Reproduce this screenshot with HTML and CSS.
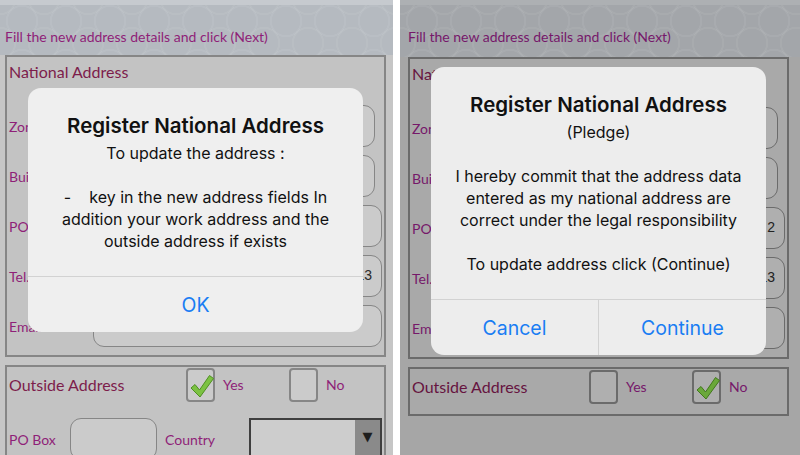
FILE: index.html
```html
<!DOCTYPE html>
<html lang="en">

<head>
    <meta charset="UTF-8">
    <meta name="viewport" content="width=device-width, initial-scale=1.0">
    <title>Register National Address</title>
    <link rel="stylesheet" href="styles.css">
</head>

<body>
    <div class="page">
        <!-- 第一屏：说明弹窗 -->
        <section class="screen">
            <div class="head">
                <p class="hint">Fill the new address details and click (Next)</p>
            </div>
            <div class="box">
                <h2 class="box-title">National Address</h2>
                <div class="rows">
                    <div class="row"><span class="label">Zone</span><span class="field short"></span></div>
                    <div class="row"><span class="label">Building</span><span class="field short"></span></div>
                    <div class="row"><span class="label">PO Box</span><span class="field"></span></div>
                    <div class="row"><span class="label">Tel.</span><span class="field">13</span></div>
                    <div class="row"><span class="label">Email</span><span class="field"></span></div>
                </div>
            </div>
            <div class="box outside">
                <div class="check-row">
                    <span class="box-title">Outside Address</span>
                    <label class="opt">
                        <span class="check on">
                            <svg viewBox="0 0 30 34" width="30" height="34">
                                <path d="M5 20 L9 16.5 L13.5 22 L23.5 7.5 L27.5 10.5 L14 29 Z" fill="#7cc243" stroke="#4f8f22" stroke-width="1" stroke-linejoin="round" />
                            </svg>
                        </span>
                        Yes
                    </label>
                    <label class="opt"><span class="check"></span>No</label>
                </div>
                <div class="po-row">
                    <span class="label po">PO Box</span>
                    <span class="field po-field"></span>
                    <span class="label country">Country</span>
                    <span class="select"><span class="arrow">&#9660;</span></span>
                </div>
            </div>

            <div class="alert">
                <div class="alert-body">
                    <h3 class="alert-title">Register National Address</h3>
                    <p class="alert-msg">To update the address :<br><br>-&nbsp;&nbsp;&nbsp; key in the new address fields In<br>addition your work address and the<br>outside address if exists</p>
                </div>
                <div class="alert-actions">
                    <a href="javascript:;" class="alert-btn">OK</a>
                </div>
            </div>
        </section>

        <!-- 第二屏：承诺弹窗 -->
        <section class="screen dim">
            <div class="head">
                <p class="hint">Fill the new address details and click (Next)</p>
            </div>
            <div class="box">
                <h2 class="box-title">National Address</h2>
                <div class="rows">
                    <div class="row"><span class="label">Zone</span><span class="field short"></span></div>
                    <div class="row"><span class="label">Building</span><span class="field short"></span></div>
                    <div class="row"><span class="label">PO Box</span><span class="field">2</span></div>
                    <div class="row"><span class="label">Tel.</span><span class="field">13</span></div>
                    <div class="row"><span class="label">Email</span><span class="field"></span></div>
                </div>
            </div>
            <div class="box outside">
                <div class="check-row">
                    <span class="box-title">Outside Address</span>
                    <label class="opt"><span class="check"></span>Yes</label>
                    <label class="opt">
                        <span class="check on">
                            <svg viewBox="0 0 30 34" width="30" height="34">
                                <path d="M5 20 L9 16.5 L13.5 22 L23.5 7.5 L27.5 10.5 L14 29 Z" fill="#6aa83a" stroke="#42781c" stroke-width="1" stroke-linejoin="round" />
                            </svg>
                        </span>
                        No
                    </label>
                </div>
            </div>

            <div class="alert">
                <div class="alert-body">
                    <h3 class="alert-title">Register National Address</h3>
                    <p class="alert-msg">(Pledge)<br><br>I hereby commit that the address data<br>entered as my national address are<br>correct under the legal responsibility<br><br>To update address click (Continue)</p>
                </div>
                <div class="alert-actions">
                    <a href="javascript:;" class="alert-btn">Cancel</a>
                    <a href="javascript:;" class="alert-btn">Continue</a>
                </div>
            </div>
        </section>
    </div>
</body>

</html>
```

FILE: styles.css
```css
* {
    margin: 0;
    padding: 0;
    box-sizing: border-box;
}

body {
    background-color: #fff;
    font-family: Lato, "Open Sans", sans-serif;
}

.page {
    display: flex;
    gap: 7px;
    width: 800px;
    height: 455px;
}

/* 左屏颜色 */
.screen {
    --inset: 5px;
    --pattern: #b5bac0;
    --band: #c6cacf;
    --bg: #c6c6c6;
    --box: #c3c3c3;
    --line: #868686;
    --field: #cbcbcb;
    --purple: #8f1f78;
    --maroon: #7d1d4b;
    --value: #2a2a2a;
    position: relative;
    width: 393px;
    height: 455px;
    overflow: hidden;
    background-color: var(--bg);
}

/* 右屏更暗 */
.screen.dim {
    --inset: 8px;
    --pattern: #a3a6aa;
    --band: #adb0b3;
    --bg: #a6a6a6;
    --box: #a9a9a9;
    --line: #6b6b6b;
    --field: #afafaf;
    --purple: #76186a;
    --maroon: #661440;
    --value: #222;
    width: 400px;
}

.head {
    border-top: 5px solid var(--band);
    padding: 24px 0 10px var(--inset);
    background-color: var(--pattern);
    background-image:
        radial-gradient(circle, transparent 14px, rgba(255, 255, 255, .06) 14.5px, rgba(255, 255, 255, .06) 16px, transparent 16.5px),
        radial-gradient(circle, transparent 14px, rgba(255, 255, 255, .05) 14.5px, rgba(255, 255, 255, .05) 16px, transparent 16.5px);
    background-size: 44px 44px;
    background-position: 0 -6px, 22px 16px;
}

.dim .head {
    padding-bottom: 12px;
}

.hint {
    font-size: 14px;
    line-height: 16px;
    color: var(--purple);
}

.box {
    width: 381px;
    margin-left: var(--inset);
    border: 2px solid var(--line);
    background-color: var(--box);
    padding: 6px 2px 8px;
}

.box-title {
    font-size: 16px;
    font-weight: 400;
    line-height: 18px;
    color: var(--maroon);
    margin-bottom: 24px;
}

.rows {
    display: flex;
    flex-direction: column;
    gap: 8px;
}

.row {
    display: flex;
    align-items: center;
    height: 42px;
}

.label {
    flex: none;
    width: 84px;
    font-size: 14px;
    color: var(--purple);
}

.field {
    flex: 1;
    height: 42px;
    border: 1.5px solid var(--line);
    border-radius: 11px;
    background-color: var(--field);
    padding-right: 9px;
    text-align: right;
    font-family: "Liberation Sans", Arial, sans-serif;
    font-size: 14px;
    line-height: 39px;
    color: var(--value);
}

.field.short {
    margin-right: 7px;
}

/* 境外地址 */
.outside {
    margin-top: 8px;
    padding: 0 2px 10px;
}

.check-row {
    display: flex;
    align-items: center;
    height: 35px;
}

.check-row .box-title {
    flex: none;
    width: 177px;
    margin-bottom: 0;
}

.opt {
    flex: none;
    display: flex;
    align-items: center;
    gap: 8px;
    width: 103px;
    font-size: 14px;
    color: var(--purple);
}

.opt:last-child {
    width: auto;
}

.check {
    position: relative;
    width: 29px;
    height: 34px;
    border: 2px solid var(--line);
    border-radius: 4px;
    background-color: var(--field);
}

.check svg {
    position: absolute;
    left: -2px;
    top: -2px;
}

.po-row {
    display: flex;
    align-items: center;
    height: 42px;
    margin-top: 16px;
}

.label.po {
    width: 61px;
}

.po-field {
    flex: none;
    width: 87px;
}

.label.country {
    width: 84px;
    margin-left: 8px;
}

.select {
    flex: none;
    display: flex;
    justify-content: flex-end;
    width: 133px;
    height: 42px;
    border: 2px solid #3f3f3f;
    background-color: #cdcdcd;
}

.select .arrow {
    width: 25px;
    padding-top: 9px;
    background-color: #8a8a8a;
    text-align: center;
    font-family: "DejaVu Sans", sans-serif;
    font-size: 13px;
    color: #1e1e1e;
}

/* 弹窗 */
.alert {
    position: absolute;
    left: 28px;
    top: 88px;
    width: 335px;
    border-radius: 13px;
    background-color: #efefef;
    overflow: hidden;
    font-family: Inter, "Noto Sans", sans-serif;
    text-align: center;
    color: #111;
}

.dim .alert {
    left: 31px;
    top: 67px;
    background-color: #ededed;
}

.alert-body {
    padding: 26px 10px 24px;
}

.alert-title {
    font-size: 20.5px;
    font-weight: 600;
    line-height: 24px;
    margin-bottom: 4px;
}

.alert-msg {
    font-size: 16px;
    line-height: 22px;
}

.alert-actions {
    display: flex;
    height: 56px;
    border-top: 1px solid #d2d2d2;
}

.alert-btn {
    flex: 1;
    display: flex;
    align-items: center;
    justify-content: center;
    font-size: 19.5px;
    color: #1a7df3;
    text-decoration: none;
}

.alert-btn + .alert-btn {
    border-left: 1px solid #d2d2d2;
}
```
